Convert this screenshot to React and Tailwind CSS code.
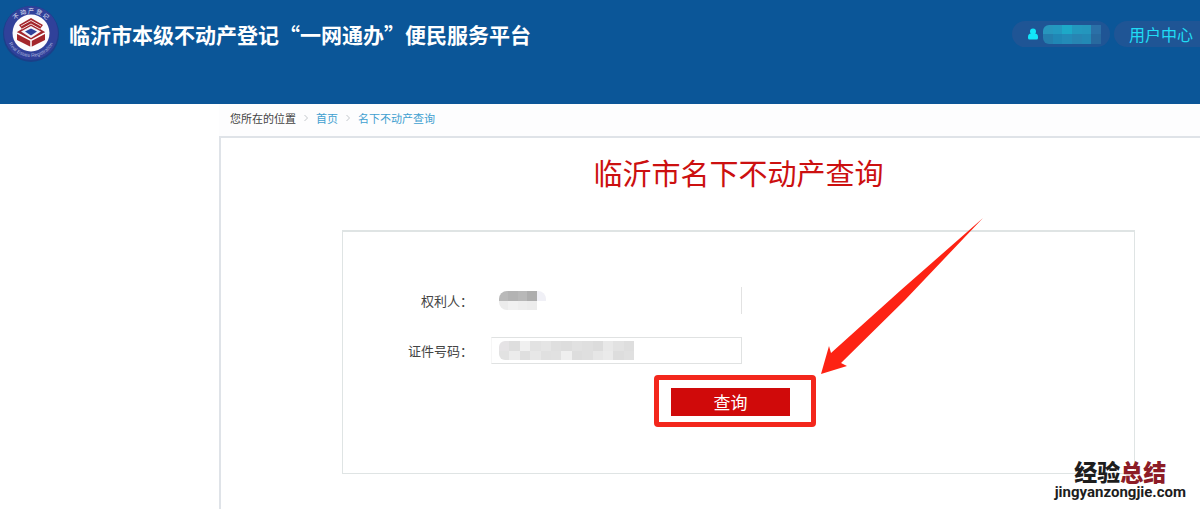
import React from "react";

function Logo() {
  return (
    <svg viewBox="0 0 60 60" className="h-15 w-15 shrink-0" role="img" aria-label="不动产登记">
      <defs>
        <path id="ring-top" d="M9 30 A21 21 0 0 1 51 30" />
        <path id="ring-bottom" d="M5 28 A25 25 0 0 0 55 28" />
      </defs>
      <circle cx="30" cy="30" r="28" fill="#26317f" opacity="0.6" />
      <circle cx="30" cy="29" r="27" fill="#30419a" />
      <circle cx="30" cy="29" r="18.5" fill="#fbfbfd" />
      <text fill="#e4e6f5" fontSize="6" fontFamily="'Noto Sans CJK SC', sans-serif" textAnchor="middle">
        <textPath href="#ring-top" startOffset="50%">不 动 产 登 记</textPath>
      </text>
      <text fill="#aab2dc" fontSize="5" fontFamily="'Liberation Sans', sans-serif" textAnchor="middle">
        <textPath href="#ring-bottom" startOffset="50%">Real Estate Registration</textPath>
      </text>
      <path d="M30 14 L42 21 L39 25 L44 28 V36 L30 43 L16 36 V28 L21 25 L18 21 Z" fill="#a3262c" />
      <path d="M20 22 L30 16.5 L40 22 M21 25 L30 20 L39 25" fill="none" stroke="#f3dcdc" strokeWidth="1" />
      <path d="M20 27.5 L30 22 L40 27.5 L30 34 Z" fill="#f5f5fa" />
      <path d="M24 27.5 L30 24.5 L36 27.5 L30 31.5 Z" fill="#30419a" />
      <path d="M16 29 L30 36.5 L44 29 M30 36.5 V43" fill="none" stroke="#fff" strokeWidth="1.5" />
    </svg>
  );
}

function UserIcon() {
  return (
    <svg viewBox="0 0 12 12" className="h-3 w-3" fill="#12e6fa" aria-hidden="true">
      <circle cx="6" cy="3.4" r="3" />
      <path d="M1 9 Q1 5.5 4 5.5 H8 Q11 5.5 11 9 V10 Q11 11.5 9.5 11.5 H2.5 Q1 11.5 1 10 Z" />
    </svg>
  );
}

function Chevron() {
  return (
    <svg viewBox="0 0 6 8" className="h-2 w-[6px]" fill="none" stroke="#c4c8cc" aria-hidden="true">
      <path d="M1.5 1 L4.5 4 L1.5 7" />
    </svg>
  );
}

function Mosaic({ rows, className }) {
  return (
    <span aria-hidden="true" className={`flex flex-col overflow-hidden ${className}`}>
      {rows.map((row, i) => (
        <span key={i} className="flex flex-1">
          {row.map((color, j) => (
            <span key={j} className="flex-1" style={{ backgroundColor: color }} />
          ))}
        </span>
      ))}
    </span>
  );
}

const accountTiles = [
  ["#2796bd", "#2399c0", "#1da9c8", "#2398be", "#2496bd", "#2b70a7"],
  ["#247fae", "#2087b5", "#238bb8", "#2785b3", "#2389b5", "#28699f"],
];
const nameTiles = [
  ["#b9b9b9", "#b3b3b3", "#b8b8b8", "#adadad", "#f0f0f6"],
  ["#ececec", "#f1f1f1", "#eeeeee", "#ececec", "#ffffff"],
];
const idTiles = [
  ["#e5e3e5", "#dedede", "#f0f0f0", "#e2e2e2", "#e5e5e5", "#dfdfdf", "#dddddd", "#e1e1e1", "#dfdfdf", "#dcdcdc", "#e8e8e8", "#e2e2e2", "#dedede"],
  ["#e2e2e2", "#ececec", "#dfdfdf", "#e7e7e7", "#e0e0e0", "#e1e1e1", "#efefef", "#dddddd", "#dfdfdf", "#e6e6e6", "#eaeaea", "#dddddd", "#e0e0e0"],
];

function Field({ id, label, tiles, tilesClass, inputClass }) {
  return (
    <div className="flex items-center">
      <label htmlFor={id} className="w-[130px] text-right text-[13px] leading-5 text-[#444]">
        {label}
      </label>
      <div className="relative ml-[18px]">
        <input id={id} type="text" className={`block h-[27px] w-[251px] bg-transparent px-2 text-[13px] outline-none ${inputClass}`} />
        <Mosaic rows={tiles} className={`pointer-events-none absolute top-1 left-2 ${tilesClass}`} />
      </div>
    </div>
  );
}

export default function App() {
  return (
    <div
      lang="zh-CN"
      className="relative flex min-h-screen flex-col overflow-hidden bg-white font-['Noto_Sans_CJK_SC',sans-serif]"
    >
      <header className="flex h-[104px] items-start justify-between bg-[#0b5698]">
        <div className="flex items-center gap-2 pt-1 pl-[1px]">
          <Logo />
          <h1 className="text-[21px] leading-8 font-bold whitespace-nowrap text-white">
            临沂市本级不动产登记“一网通办”便民服务平台
          </h1>
        </div>
        <nav className="flex shrink-0 gap-1 pt-[21px]">
          <a href="#account" aria-label="当前用户" className="flex h-[26px] w-[98px] items-center gap-1 rounded-full bg-[#1f5595] pl-[15px]">
            <UserIcon />
            <Mosaic rows={accountTiles} className="h-[19px] w-[58px] rounded-l-md" />
          </a>
          <a href="#center" className="flex h-[26px] items-center rounded-l-full bg-[#1f5595] pr-[7px] pl-[15px] text-[16px] text-[#1fdcf5]">
            用户中心
          </a>
        </nav>
      </header>

      <div className="flex flex-1 flex-col pl-[219px]">
        <nav aria-label="面包屑" className="flex h-8 items-center gap-[7px] bg-[#fdfdfe] pb-1 pl-[11px] text-[11px] text-[#3fa0d0]">
          <span className="text-[#444]">您所在的位置</span>
          <Chevron />
          <a href="#home">首页</a>
          <Chevron />
          <a href="#query">名下不动产查询</a>
        </nav>

        <main className="flex-1 border-t-2 border-l-2 border-[#dfe3e8] pr-[65px] pb-9 pl-[121px]">
          <h2 className="pt-[14px] text-center text-[29px] leading-10 font-normal text-[#cc1010]">临沂市名下不动产查询</h2>
          <form
            onSubmit={(e) => e.preventDefault()}
            className="mt-[38px] flex h-[244px] flex-col border border-t-2 border-[#dfe4e4] pt-[55px]"
          >
            <div className="flex flex-col gap-[23px]">
              <Field id="owner" label="权利人：" tiles={nameTiles} tilesClass="h-[19px] w-[47px] rounded-lg" inputClass="border-r border-[#e2e2e2]" />
              <Field id="idno" label="证件号码：" tiles={idTiles} tilesClass="h-[19px] w-[135px] rounded-l-md" inputClass="border border-[#e0e2e2] border-l-[#f6f6f6]" />
            </div>
            <div className="relative mt-6 ml-[328px] w-[119px]">
              <button type="submit" className="block h-7 w-full bg-[#d00a0a] text-[17px] leading-7 text-white">
                查询
              </button>
              <div className="pointer-events-none absolute -top-[13px] -left-[17px] h-[52px] w-[162px] rounded-[4px] border-5 border-[#f3271c]" />
              <svg viewBox="0 0 162 157" className="pointer-events-none absolute -top-[170px] left-[150px] h-[157px] w-[162px]" aria-hidden="true">
                <path d="M0 156 L8 128 L10 135 L80 72 L162 0 L84 82 L20 145 L26 148 Z" fill="#fd2314" />
              </svg>
            </div>
          </form>
        </main>
      </div>

      <div className="absolute right-[14px] bottom-[10px] flex flex-col items-center">
        <div className="text-[23px] leading-[26px] font-black text-[#1d1d1d]">
          经验<span className="text-[#8d1c26]">总结</span>
        </div>
        <div className="font-[Roboto,sans-serif] text-[15px] leading-4 font-bold text-[#1d1d1d]">
          jingyanzongjie.com
        </div>
      </div>
    </div>
  );
}
